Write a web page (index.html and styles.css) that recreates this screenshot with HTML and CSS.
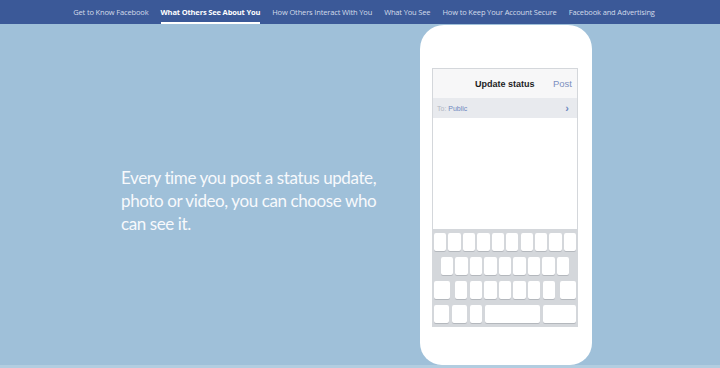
FILE: index.html
```html
<!DOCTYPE html>
<html lang="en">
	<head>
		<title>What Others See About You</title>
		<link rel="stylesheet" href="styles.css">
	</head>
	<body>
		<nav class="topnav">
			<a href="#">Get to Know Facebook</a>
			<a href="#" class="active">What Others See About You</a>
			<a href="#">How Others Interact With You</a>
			<a href="#">What You See</a>
			<a href="#">How to Keep Your Account Secure</a>
			<a href="#">Facebook and Advertising</a>
		</nav>
		<main class="stage">
			<p class="lead">Every time you post a status update, photo or video, you can choose who can see it.</p>
			<div class="phone">
				<div class="screen">
					<div class="screen-head">
						<span class="screen-title">Update status</span>
						<span class="screen-post">Post</span>
					</div>
					<div class="to-row">
						<span><span class="to-label">To:</span> <span class="to-value">Public</span></span>
						<span class="to-arrow">&#8250;</span>
					</div>
					<div class="compose"></div>
					<div class="keyboard">
						<div class="kb-row">
							<span class="key"></span><span class="key"></span><span class="key"></span><span class="key"></span><span class="key"></span>
							<span class="key"></span><span class="key"></span><span class="key"></span><span class="key"></span><span class="key"></span>
						</div>
						<div class="kb-row row-two">
							<span class="key"></span><span class="key"></span><span class="key"></span><span class="key"></span><span class="key"></span>
							<span class="key"></span><span class="key"></span><span class="key"></span><span class="key"></span>
						</div>
						<div class="kb-row row-three">
							<span class="key wide"></span>
							<div class="kb-mid">
								<span class="key"></span><span class="key"></span><span class="key"></span><span class="key"></span>
								<span class="key"></span><span class="key"></span><span class="key"></span>
							</div>
							<span class="key wide"></span>
						</div>
						<div class="kb-row row-four">
							<span class="key k15"></span>
							<span class="key k15"></span>
							<span class="key k12"></span>
							<span class="key space"></span>
							<span class="key enter"></span>
						</div>
					</div>
				</div>
			</div>
		</main>
		<div class="strip"></div>
	</body>
</html>
```

FILE: styles.css
```css
body {
	margin: 0;
	background-color: #9fc0d9;
	font-family: "Liberation Sans", Arial, sans-serif;
	overflow: hidden;
}
.topnav {
	height: 24px;
	background-color: #3b5998;
	display: flex;
	justify-content: center;
	align-items: stretch;
	gap: 12px;
	padding-left: 8px;
}
.topnav a {
	color: #d3dbea;
	text-decoration: none;
	font-family: "Open Sans", sans-serif;
	font-size: 7.5px;
	letter-spacing: -0.15px;
	line-height: 24px;
	border-bottom: 2px solid transparent;
	box-sizing: border-box;
}
.topnav a.active {
	color: #fff;
	font-weight: bold;
	border-bottom-color: #fff;
}
.stage {
	height: 341px;
	display: flex;
	align-items: flex-start;
}
.lead {
	width: 265px;
	margin: 142px 34px 0 121px;
	color: #f7f9fc;
	font-family: Lato, sans-serif;
	font-size: 17px;
	line-height: 23px;
	letter-spacing: -0.4px;
}
.phone {
	width: 172px;
	height: 340px;
	margin-top: 1px;
	background: #fff;
	border-radius: 24px 24px 22px 22px;
	box-sizing: border-box;
	padding: 43px 14px 0 12px;
}
.screen {
	border: 1px solid #d4d7db;
	border-bottom: none;
}
.screen-head {
	height: 29px;
	background: #f7f7f8;
	display: flex;
	align-items: center;
	justify-content: flex-end;
	padding-right: 5px;
	position: relative;
}
.screen-title {
	position: absolute;
	left: 42px;
	font-size: 9px;
	font-weight: bold;
	color: #1d1d1f;
}
.screen-post {
	font-size: 9.5px;
	color: #7c8fbf;
}
.to-row {
	height: 20px;
	background: #e8eaee;
	display: flex;
	align-items: center;
	justify-content: space-between;
	padding: 0 8px 0 4px;
	font-size: 7px;
}
.to-label {
	color: #b1b7c2;
}
.to-value {
	color: #6f88c0;
}
.to-arrow {
	color: #6f88c0;
	font-size: 11px;
	font-weight: bold;
}
.compose {
	height: 111px;
	background: #fff;
}
.keyboard {
	height: 98px;
	background: #d4d7db;
	box-sizing: border-box;
	padding: 4px 1px 0 1px;
	display: flex;
	flex-direction: column;
	gap: 6.5px;
}
.kb-row {
	height: 17.5px;
	display: flex;
	gap: 2.2px;
}
.key {
	flex: 1;
	background: #fff;
	border-radius: 2px;
	box-shadow: 0 1px 0 #b4b8bd;
}
.row-two {
	padding: 0 7px;
}
.row-three {
	gap: 5px;
}
.key.wide {
	flex: 0 0 16px;
}
.kb-mid {
	flex: 1;
	display: flex;
	gap: 2.2px;
}
.row-four {
	gap: 3px;
}
.key.k15 {
	flex: 0 0 15px;
}
.key.k12 {
	flex: 0 0 12px;
}
.key.space {
	flex: 0 0 55px;
}
.key.enter {
	flex: 1;
}
.strip {
	height: 3px;
	background: #b2cde0;
}
```
